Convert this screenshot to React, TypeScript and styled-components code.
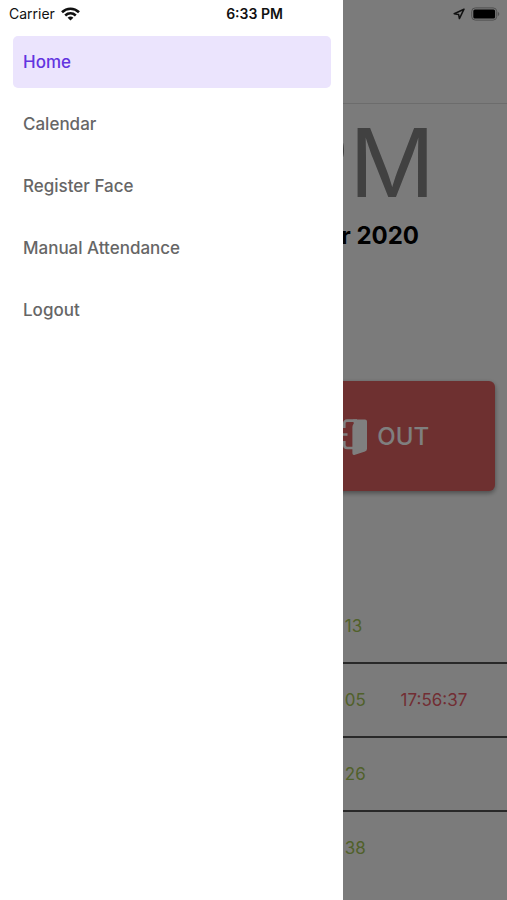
import React from "react";
import styled, { createGlobalStyle } from "styled-components";

const GlobalStyle = createGlobalStyle`
  * { box-sizing: border-box; }
  body {
    margin: 0;
    background: #f7f7f7;
    font-family: Inter, "Liberation Sans", sans-serif;
  }
`;

const Screen = styled.div`
  position: relative;
  min-height: 100vh;
  overflow: hidden;
`;

const StatusBar = styled.header`
  position: absolute;
  inset: 0 0 auto 0;
  z-index: 3;
  display: grid;
  grid-template-columns: 1fr auto 1fr;
  align-items: center;
  height: 28px;
  padding: 0 7px 0 9px;
  color: #111;
  font-size: 14px;
  line-height: 20px;
`;

const StatusGroup = styled.div<{ $end?: boolean }>`
  display: flex;
  align-items: center;
  justify-content: ${(p) => (p.$end ? "flex-end" : "flex-start")};
  gap: 6px;
`;

const StatusTime = styled.time`
  font-weight: 600;
`;

const Drawer = styled.nav`
  position: absolute;
  inset: 0 auto 0 0;
  z-index: 2;
  display: flex;
  flex-direction: column;
  gap: 10px;
  width: 343px;
  max-width: 85%;
  padding: 36px 12px 12px 13px;
  background: #fff;
`;

const DrawerItem = styled.a<{ $active?: boolean }>`
  display: flex;
  align-items: center;
  height: 52px;
  padding: 0 10px;
  border-radius: 5px;
  background: ${(p) => (p.$active ? "#ebe4fd" : "transparent")};
  color: ${(p) => (p.$active ? "#6234e0" : "#666")};
  font-size: 17px;
  font-weight: 500;
  line-height: 24px;
  text-decoration: none;
`;

const Scrim = styled.div`
  position: absolute;
  inset: 0;
  z-index: 1;
  background: rgba(0, 0, 0, 0.5);
`;

const TopBar = styled.div`
  height: 104px;
  border-bottom: 1px solid #d8d8d8;
`;

const Content = styled.main`
  display: flex;
  flex-direction: column;
`;

const Clock = styled.div`
  margin-top: 4px;
  padding-right: 72px;
  color: #828282;
  font-size: 95px;
  font-weight: 400;
  line-height: 110px;
  text-align: right;
`;

const DateLine = styled.div`
  padding-right: 88px;
  color: #000;
  font-size: 24px;
  font-weight: 700;
  line-height: 36px;
  text-align: right;
`;

const Actions = styled.div`
  display: grid;
  grid-template-columns: 1fr 1fr;
  gap: 24px;
  margin-top: 127px;
  padding: 0 12px;
`;

const OutButton = styled.button`
  grid-column: 2;
  display: flex;
  align-items: center;
  justify-content: center;
  gap: 10px;
  height: 110px;
  padding: 2px 0 0;
  border: 0;
  border-radius: 6px;
  background: #dc6060;
  box-shadow: 0 2px 5px rgba(0, 0, 0, 0.4);
  color: #fff;
  font-family: inherit;
  font-size: 24px;
  font-weight: 500;
  line-height: 32px;
`;

const Log = styled.table`
  width: 100%;
  margin-top: 99px;
  border-collapse: separate;
  border-spacing: 0;
  table-layout: fixed;
`;

const InColumn = styled.col`
  width: 11%;
`;

const OutColumn = styled.col`
  width: 21%;
`;

const LogCell = styled.td<{ $kind?: "in" | "out"; $last?: boolean }>`
  height: 74px;
  padding: 0;
  border-bottom: 2px solid ${(p) => (p.$last ? "transparent" : "#505050")};
  color: ${(p) => (p.$kind === "out" ? "#e45c68" : "#a2c255")};
  font-size: 17px;
  line-height: 24px;
  text-align: left;
`;

const WifiIcon = () => (
  <svg width="19" height="14" viewBox="0 0 19 14" fill="none" stroke="#111" strokeWidth="2.6" aria-hidden="true">
    <path d="M1 5.2C5.8.6 13.2.6 18 5.2" />
    <path d="M4.2 8.5c3.1-2.8 7.5-2.8 10.6 0" />
    <path d="M9.5 13.6 6.6 10.7c1.7-1.5 4.1-1.5 5.8 0z" fill="#111" stroke="none" />
  </svg>
);

const LocationIcon = () => (
  <svg width="12" height="12" viewBox="0 0 12 12" fill="none" stroke="#111" strokeWidth="1.5" strokeLinejoin="round" aria-hidden="true">
    <path d="M11 1.2 1.2 5.8l4.4.6.8 4.2z" />
  </svg>
);

const BatteryIcon = () => (
  <svg width="29" height="14" viewBox="0 0 29 14" aria-hidden="true">
    <rect x=".7" y=".9" width="25" height="12.2" rx="3.6" fill="none" stroke="#505050" strokeWidth="1" />
    <rect x="2.3" y="2.5" width="21.8" height="9" rx="1.6" fill="#000" />
    <path d="M26.8 4.8c2 .8 2 3.6 0 4.4z" fill="#505050" />
  </svg>
);

const DoorIcon = () => (
  <svg width="36" height="38" viewBox="0 0 36 38" fill="none" stroke="#fff" strokeWidth="2.6" aria-hidden="true">
    <path d="M13.3 10V5.6q0-3 3-3H26" />
    <path d="M13.3 23v4q0 3 3 3H22" />
    <path d="M1 16.5h15.5M8 10l-6.5 6.5L8 23" />
    <path d="M22 1.4h12q2 0 2 2v27.4q0 2-2 2.7l-10 3.3q-2.6.8-2.6-1.6V9q0-2 1.4-3.6z" fill="#fff" stroke="none" />
  </svg>
);

const menu = ["Home", "Calendar", "Register Face", "Manual Attendance", "Logout"];

const log = [
  { in: "13", out: "" },
  { in: "05", out: "17:56:37" },
  { in: "26", out: "" },
  { in: "38", out: "" },
];

export default function App() {
  return (
    <Screen>
      <GlobalStyle />
      <StatusBar>
        <StatusGroup>
          Carrier
          <WifiIcon />
        </StatusGroup>
        <StatusTime>6:33 PM</StatusTime>
        <StatusGroup $end>
          <LocationIcon />
          <BatteryIcon />
        </StatusGroup>
      </StatusBar>
      <Drawer aria-label="Main menu">
        {menu.map((label, i) => (
          <DrawerItem key={label} href="#" $active={i === 0}>
            {label}
          </DrawerItem>
        ))}
      </Drawer>
      <Content>
        <TopBar />
        <Clock>PM</Clock>
        <DateLine>r 2020</DateLine>
        <Actions>
          <OutButton type="button">
            <DoorIcon />
            OUT
          </OutButton>
        </Actions>
        <Log>
          <colgroup>
            <col />
            <InColumn />
            <OutColumn />
          </colgroup>
          <tbody>
            {log.map((row, i) => (
              <tr key={row.in}>
                <LogCell $last={i === log.length - 1} />
                <LogCell $kind="in" $last={i === log.length - 1}>{row.in}</LogCell>
                <LogCell $kind="out" $last={i === log.length - 1}>{row.out}</LogCell>
              </tr>
            ))}
          </tbody>
        </Log>
      </Content>
      <Scrim />
    </Screen>
  );
}
